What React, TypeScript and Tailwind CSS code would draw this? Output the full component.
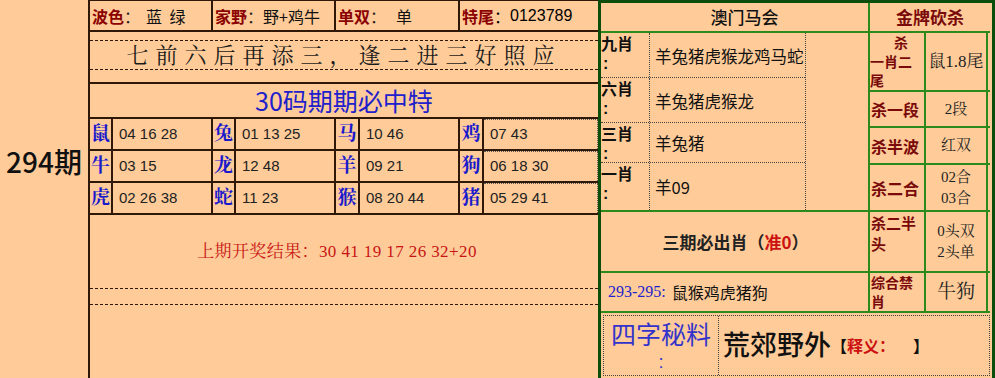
import React from 'react';

const sans = "font-['Noto_Sans_CJK_SC','Noto_Sans',sans-serif]";
const serif = "font-['Liberation_Serif','Noto_Serif_CJK_SC','Noto_Sans_CJK_SC',serif]";
const num = "font-['Liberation_Sans','Noto_Sans_CJK_SC',sans-serif]";

const grid = [
  [
    ['鼠', '04 16 28'],
    ['兔', '01 13 25'],
    ['马', '10 46'],
    ['鸡', '07 43'],
  ],
  [
    ['牛', '03 15'],
    ['龙', '12 48'],
    ['羊', '09 21'],
    ['狗', '06 18 30'],
  ],
  [
    ['虎', '02 26 38'],
    ['蛇', '11 23'],
    ['猴', '08 20 44'],
    ['猪', '05 29 41'],
  ],
];

const labelW = ['w-[23px]', 'w-[23px]', 'w-[24px]', 'w-[24px]'];
const numW = ['w-[100px]', 'w-[100px]', 'w-[100px]', 'flex-1'];

const xiao = [
  { label: '九肖', text: '羊兔猪虎猴龙鸡马蛇', h: 'h-[45px]' },
  { label: '六肖', text: '羊兔猪虎猴龙', h: 'h-[45px]' },
  { label: '三肖', text: '羊兔猪', h: 'h-[40px]' },
  { label: '一肖', text: '羊09', h: 'h-[47px]' },
];

const TopCell = ({ label, value, className }) => (
  <div className={`flex items-center border-r-2 border-[#301808] pl-[2px] text-[16px] ${className}`}>
    <span className="font-bold text-[#8b0000]">{label}</span>
    <span className="text-[#222]">：</span>
    <span className="text-[#111]">{value}</span>
  </div>
);

const KillRow = ({ h, label, value, top = false }) => (
  <div className={`flex ${h} border-b-2 border-[#2c8a1c]`}>
    <div
      className={`flex w-[56px] border-r-2 border-[#2c8a1c] px-[1px] font-bold text-[#7a0a0a] ${
        top ? 'items-start text-[15px] leading-[21px]' : 'items-center text-[16px] leading-[20px]'
      }`}
    >
      <div>{label}</div>
    </div>
    <div className={`flex w-[62px] items-center justify-center border-r-2 border-[#2c8a1c] text-center text-[15px] leading-[21px] text-[#222] ${serif}`}>
      <div>{value}</div>
    </div>
  </div>
);

export default function App() {
  return (
    <div className={`flex h-[378px] w-[995px] overflow-hidden bg-[#ffcc99] ${sans}`}>
      {/* period */}
      <div className="flex w-[88px] justify-center pt-[147px]">
        <span className="text-[28px] font-medium leading-none text-[#111]">294期</span>
      </div>

      {/* left panel */}
      <div className="flex w-[510px] flex-col border-l-2 border-t border-[#301808]">
        <div className="flex h-[31px] border-b-2 border-[#301808]">
          <TopCell label="波色" value={<span className="pl-[6px] tracking-[2px]">蓝 绿</span>} className="w-[123px]" />
          <TopCell label="家野" value="野+鸡牛" className="w-[123px]" />
          <TopCell label="单双" value={<span className="pl-[10px]">单</span>} className="w-[124px]" />
          <div className="flex flex-1 items-center pl-[2px] text-[16px]">
            <span className="font-bold text-[#8b0000]">特尾</span>
            <span>：</span>
            <span className={num}>0123789</span>
          </div>
        </div>

        <div className="h-[52px] border-b-2 border-[#301808] pt-[8px]">
          <div className={`flex h-[30px] items-center justify-center border-y border-dashed border-[#301808] text-[22px] tracking-[7px] text-[#1a1a1a] ${serif}`}>
            七前六后再添三，逢二进三好照应
          </div>
        </div>

        <div className="flex h-[35px] items-center justify-center border-b-2 border-[#301808] text-[25px] text-[#2020cc]">
          30码期期必中特
        </div>

        {grid.map((row, r) => (
          <div key={r} className="flex h-[32px] border-b-2 border-[#301808]">
            {row.map(([animal, nums], c) => (
              <React.Fragment key={animal}>
                <div
                  className={`flex ${labelW[c]} items-center justify-center border-r-2 border-[#301808] text-[19px] font-bold text-[#1a1acc] ${serif}`}
                >
                  {animal}
                </div>
                <div
                  className={`flex ${numW[c]} items-center whitespace-pre pl-[6px] text-[15px] text-[#222] ${num} ${
                    c < 3 ? 'border-r-2 border-[#301808]' : 'border-t border-r border-dotted border-[#555]'
                  }`}
                >
                  {nums}
                </div>
              </React.Fragment>
            ))}
          </div>
        ))}

        <div className="flex flex-1 flex-col">
          <div className={`flex h-[73px] items-center justify-center pr-[14px] text-[17px] tracking-[0.4px] text-[#c81414] ${serif}`}>
            上期开奖结果：30 41 19 17 26 32+20
          </div>
          <div className="h-[17px] border-y border-dashed border-[#301808]" />
        </div>
      </div>

      {/* right panel */}
      <div className="flex flex-1 flex-col border-x-[3px] border-t-[3px] border-[#0b4d0b]">
        <div className="flex">
          {/* 澳门马会 column */}
          <div className="flex w-[267px] flex-col">
            <div className="flex h-[30px] items-center justify-center border-b-2 border-[#2c8a1c] pl-[20px] text-[17px] font-medium text-[#111]">
              澳门马会
            </div>
            <div className="h-[179px] border-b-2 border-[#2c8a1c]">
              <div className="w-[205px] border-r border-dotted border-[#444]">
                {xiao.map((x, i) => (
                  <div key={x.label} className={`flex ${x.h} ${i < 3 ? 'border-b border-dotted border-[#444]' : ''}`}>
                    <div className="flex w-[49px] flex-col border-r border-dotted border-[#444] text-[16px] font-bold text-[#111]">
                      <div className="leading-[20px]">{x.label}</div>
                      <div className={`mt-[3px] pl-[2px] leading-[16px] ${num}`}>:</div>
                    </div>
                    <div className="flex flex-1 items-center whitespace-nowrap pl-[5px] pt-[2px] text-[16.5px] text-[#111]">{x.text}</div>
                  </div>
                ))}
              </div>
            </div>
            <div className="flex h-[61px] items-center justify-center border-b-2 border-[#2c8a1c] pl-[2px] text-[17px] font-bold text-[#222]">
              三期必出肖（<span className="text-[#cc1111]">准0</span>）
            </div>
            <div className="flex h-[40px] items-center border-b-2 border-[#2c8a1c] pl-[7px] text-[16px] text-[#111]">
              <span className={`text-[#2222cc] ${serif}`}>293-295:</span>
              <span className="pl-[6px]">鼠猴鸡虎猪狗</span>
            </div>
          </div>

          {/* 金牌砍杀 column */}
          <div className="flex w-[122px] flex-col border-l-2 border-[#2c8a1c]">
            <div className="flex h-[30px] items-center justify-center border-b-2 border-[#2c8a1c] text-[17px] font-bold text-[#7a0a0a]">
              金牌砍杀
            </div>
            <div className="flex h-[59px] border-b-2 border-[#2c8a1c]">
              <div className="w-[56px] border-r-2 border-[#2c8a1c] text-[14px] font-bold leading-[19px] text-[#7a0a0a]">
                <div className="pl-[24px]">杀</div>
                <div>一肖二</div>
                <div>尾</div>
              </div>
              <div className={`flex w-[62px] items-center justify-center border-r-2 border-[#2c8a1c] text-[17px] text-[#222] ${serif}`}>
                鼠1.8尾
              </div>
            </div>
            <KillRow h="h-[36px]" label="杀一段" value="2段" />
            <KillRow h="h-[37px]" label="杀半波" value="红双" />
            <KillRow
              h="h-[47px]"
              label="杀二合"
              value={
                <>
                  02合
                  <br />
                  03合
                </>
              }
            />
            <KillRow
              h="h-[61px]"
              label="杀二半头"
              top
              value={
                <>
                  0头双
                  <br />
                  2头单
                </>
              }
            />
            <div className="flex h-[40px] border-b-2 border-[#2c8a1c]">
              <div className="w-[56px] border-r-2 border-[#2c8a1c] px-[1px] text-[14px] font-bold leading-[19px] text-[#7a0a0a]">
                综合禁肖
              </div>
              <div className={`flex w-[62px] items-center justify-center border-r-2 border-[#2c8a1c] text-[19px] text-[#222] ${serif}`}>
                牛狗
              </div>
            </div>
          </div>
        </div>

        {/* 四字秘料 */}
        <div className="flex flex-1 p-[2px]">
          <div className="flex flex-1 border border-dotted border-[#444]">
            <div className="flex w-[115px] flex-col items-center border-r border-dotted border-[#444] text-[25px] leading-[34px] text-[#3333cc]">
              <div>四字秘料</div>
              <div className={`mt-[3px] text-[18px] leading-[18px] ${num}`}>:</div>
            </div>
            <div className="flex items-center pl-[4px] pb-[2px]">
              <span className="text-[27px] font-medium text-[#111]">荒郊野外</span>
              <span className="text-[16px] font-bold text-[#111]">【</span>
              <span className="text-[16px] font-bold text-[#cc1111]">释义：</span>
              <span className="pl-[18px] text-[16px] font-bold text-[#111]">】</span>
            </div>
          </div>
        </div>
      </div>
    </div>
  );
}
